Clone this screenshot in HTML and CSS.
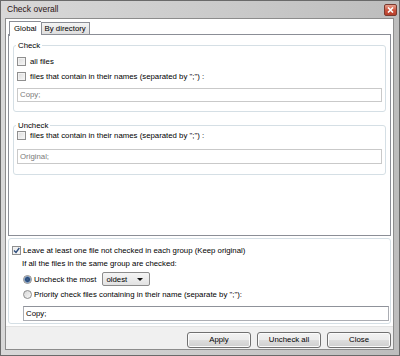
FILE: index.html
```html
<!DOCTYPE html>
<html>
<head>
<meta charset="utf-8">
<link rel="stylesheet" href="styles.css">
</head>
<body>
<div class="window">
  <div class="titlebar">
    <span class="title">Check overall</span>
    <span class="close"><svg width="7" height="6" viewBox="0 0 7 6"><path d="M1 0.5 L6 5.5 M6 0.5 L1 5.5" stroke="#fff" stroke-width="1.6"/></svg></span>
  </div>
  <div class="client">
    <div class="tabstrip">
      <div class="tab active">Global</div>
      <div class="tab">By directory</div>
    </div>
    <div class="tabpanel">
      <fieldset class="group group-check">
        <legend>Check</legend>
        <div class="row row-first"><span class="cb"></span><span>all files</span></div>
        <div class="row row-second"><span class="cb"></span><span>files that contain in their names (separated by ";") :</span></div>
        <div class="field field-disabled field-check">Copy;</div>
      </fieldset>
      <fieldset class="group group-uncheck">
        <legend>Uncheck</legend>
        <div class="row"><span class="cb"></span><span>files that contain in their names (separated by ";") :</span></div>
        <div class="field field-disabled field-uncheck">Original;</div>
      </fieldset>
    </div>
    <div class="bottomgroup">
      <div class="row row-leave"><span class="cb checked"><svg width="7" height="7" viewBox="0 0 7 7"><path d="M1 3.5 L3 5.5 L6.3 1" fill="none" stroke="#2d4d7c" stroke-width="1.4"/></svg></span><span>Leave at least one file not checked in each group (Keep original)</span></div>
      <div class="line-ifall">If all the files in the same group are checked:</div>
      <div class="row row-radio1"><span class="radio on"></span><span>Uncheck the most</span><span class="combo"><span>oldest</span><svg width="6" height="3" viewBox="0 0 6 3"><path d="M0 0 H6 L3 3 Z" fill="#111"/></svg></span></div>
      <div class="row row-radio2"><span class="radio"></span><span>Priority check files containing in their name (separate by ";"):</span></div>
      <div class="field field-bottom">Copy;</div>
    </div>
    <div class="buttonbar">
      <div class="btn">Apply</div>
      <div class="btn">Uncheck all</div>
      <div class="btn">Close</div>
    </div>
  </div>
</div>
</body>
</html>
```

FILE: styles.css
```css
* { box-sizing: border-box; }
html, body { margin: 0; padding: 0; }
body {
  width: 400px;
  height: 356px;
  overflow: hidden;
  font-family: "Liberation Sans", Arial, sans-serif;
  font-size: 7.8px;
  color: #000;
  background: #c8c8c8;
}
.window {
  width: 400px;
  height: 356px;
  border: 1px solid #6a6a6a;
  background: linear-gradient(to right, #d8d8d8, #c9c9c9 60%, #bdbdbd);
  display: flex;
  flex-direction: column;
}
.titlebar {
  height: 17px;
  display: flex;
  justify-content: space-between;
  align-items: flex-start;
  padding: 0 2px 0 6px;
  flex: none;
}
.title {
  font-size: 8.5px;
  line-height: 17px;
  color: #2a1414;
}
.close {
  margin-top: 3px;
  width: 13px;
  height: 12px;
  border: 1px solid #7a3a30;
  border-radius: 2px;
  background: linear-gradient(#e8a08e, #c9503a 55%, #b6402c);
  display: flex;
  align-items: center;
  justify-content: center;
}
.client {
  flex: 1;
  margin: 0 5px 5px 4px;
  background: #fff;
  border: 1px solid #8c8c8c;
  display: flex;
  flex-direction: column;
}
.tabstrip {
  display: flex;
  align-items: flex-end;
  height: 16px;
  padding: 1px 0 0 3px;
  flex: none;
}
.tab {
  height: 12px;
  line-height: 11px;
  padding: 0 3px;
  border: 1px solid #8b8e96;
  border-bottom: none;
  background: linear-gradient(#f4f4f4, #dedede);
  margin-bottom: 1px;
}
.tab.active {
  height: 15px;
  line-height: 14px;
  padding: 0 4px;
  background: #fff;
  margin-bottom: -1px;
  position: relative;
  z-index: 1;
  border-right: none;
}
.tabpanel {
  height: 202px;
  margin: -1px 2px 0 2px;
  border: 1px solid #8b8e96;
  background: #fff;
  padding: 0 4px 0 4px;
  flex: none;
}
.group {
  margin: 0;
  border: 1px solid #d5dfe5;
  border-radius: 3px;
  padding: 0 3px;
  min-width: 0;
}
.group legend {
  padding: 0 2px;
  margin-left: -1px;
  line-height: 9px;
  height: 9px;
}
.group-check {
  margin-top: 6px;
  padding-bottom: 9px;
}
.group-uncheck {
  margin-top: 9px;
  padding-bottom: 10px;
}
.row {
  display: flex;
  align-items: center;
  height: 11px;
  gap: 4px;
}
.row-first { margin-top: 6px; }
.row-second { margin-top: 4px; }
.cb {
  width: 9px;
  height: 9px;
  border: 1px solid #8f8f8f;
  background: linear-gradient(135deg, #dcdcdc, #f7f7f7);
  box-shadow: inset 0 0 0 1px #f2f2f2;
  flex: none;
  display: flex;
  align-items: center;
  justify-content: center;
}
.cb.checked { background: linear-gradient(135deg, #e6e6e6, #fdfdfd); }
.field {
  border: 1px solid #abadb3;
  border-top-color: #8f929a;
  height: 15px;
  line-height: 13px;
  padding: 0 2px;
  color: #000;
}
.field-disabled {
  border-color: #c9c9c9;
  color: #7a7a7a;
}
.field-check { margin-top: 6px; height: 14px; line-height: 12px; }
.field-uncheck { margin-top: 8px; }
.bottomgroup {
  margin: 2px 2px 0 2px;
  height: 86px;
  border: 1px solid #d5dfe5;
  border-radius: 3px;
  flex: none;
}
.row-leave {
  margin-top: 6px;
  padding-left: 3px;
  gap: 2px;
}
.line-ifall {
  height: 10px;
  line-height: 10px;
  margin-top: 3px;
  padding-left: 13px;
}
.row-radio1 {
  margin-top: 3px;
  height: 14px;
  padding-left: 14px;
  gap: 2px;
}
.row-radio2 {
  margin-top: 3px;
  padding-left: 14px;
  gap: 2px;
}
.radio {
  width: 9px;
  height: 9px;
  border-radius: 50%;
  border: 1px solid #8c8c8c;
  background: linear-gradient(135deg, #d6d6d6, #f8f8f8);
  flex: none;
}
.radio.on {
  background: radial-gradient(circle, #3d5f8e 0, #2a4a78 2px, #7ea0c9 3px, #e6e6e6 3.6px);
}
.combo {
  margin-left: 4px;
  width: 48px;
  height: 14px;
  border: 1px solid #8c8c8c;
  border-radius: 2px;
  background: linear-gradient(#f5f5f5, #e2e2e2);
  display: flex;
  align-items: center;
  justify-content: space-between;
  padding: 0 6px 0 3px;
}
.field-bottom {
  margin: 6px 1px 0 14px;
}
.buttonbar {
  flex: 1;
  margin-top: 2px;
  background: #f0f0f0;
  border-top: 1px solid #e2e2e2;
  display: flex;
  justify-content: flex-end;
  align-items: flex-start;
  gap: 6px;
  padding: 5px 2px 0 0;
}
.btn {
  width: 64px;
  height: 16px;
  border: 1px solid #707070;
  border-radius: 3px;
  background: linear-gradient(#f2f2f2, #ebebeb 50%, #dddddd 51%, #cfcfcf);
  box-shadow: inset 0 0 0 1px #fbfbfb;
  text-align: center;
  line-height: 14px;
}
```
